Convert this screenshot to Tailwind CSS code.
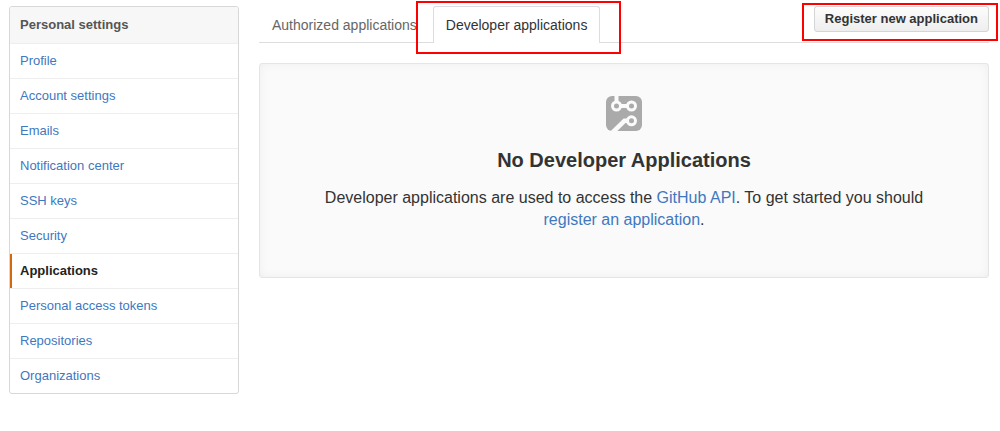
<!DOCTYPE html>
<html lang="en">
<head>
<meta charset="utf-8">
<meta name="viewport" content="width=device-width, initial-scale=1">
<title>Developer applications</title>
<script src="https://cdn.jsdelivr.net/npm/@tailwindcss/browser@4"></script>
</head>
<body class="bg-white font-['Liberation_Sans',Arial,sans-serif] text-[13px] text-[#333]">
<div class="flex items-start gap-5 pt-1.5 pr-[11px] pl-[9px]">
  <nav aria-labelledby="settings-title" class="w-[230px] shrink-0 overflow-hidden rounded-[3px] border border-[#d8d8d8] leading-[34px]">
    <h2 id="settings-title" class="border-b border-[#eee] bg-[#f7f7f7] px-2.5 leading-9 font-bold text-[#555]">Personal settings</h2>
    <ul class="divide-y divide-[#eee] text-[#4078c0]">
      <li><a href="#" class="block px-2.5">Profile</a></li>
      <li><a href="#" class="block px-2.5">Account settings</a></li>
      <li><a href="#" class="block px-2.5">Emails</a></li>
      <li><a href="#" class="block px-2.5">Notification center</a></li>
      <li><a href="#" class="block px-2.5">SSH keys</a></li>
      <li><a href="#" class="block px-2.5">Security</a></li>
      <li><a href="#" aria-current="page" class="block border-l-2 border-[#d26911] px-2 font-bold text-[#222]">Applications</a></li>
      <li><a href="#" class="block px-2.5">Personal access tokens</a></li>
      <li><a href="#" class="block px-2.5">Repositories</a></li>
      <li><a href="#" class="block px-2.5">Organizations</a></li>
    </ul>
  </nav>

  <main class="min-w-0 flex-1">
    <div class="flex items-start justify-between border-b border-[#ddd]">
      <div class="-mb-px flex gap-[3px] text-sm leading-9">
        <a href="#" class="border border-b-0 border-transparent px-3 whitespace-nowrap text-[#666]">Authorized applications</a>
        <div class="relative">
          <a href="#" aria-current="page" class="block rounded-t-[3px] border border-b-0 border-[#ddd] bg-white px-3 whitespace-nowrap text-[#333]">Developer applications</a>
          <div aria-hidden="true" class="pointer-events-none absolute -top-[5px] -right-[21px] -bottom-[11px] -left-[17px] border-2 border-[#f00]"></div>
        </div>
      </div>
      <div class="relative">
        <button type="button" class="block h-[26px] cursor-pointer rounded-[3px] border border-[#d5d5d5] bg-linear-to-b from-[#fcfcfc] to-[#eee] px-2.5 leading-6 font-bold whitespace-nowrap text-[#333]">Register new application</button>
        <div aria-hidden="true" class="pointer-events-none absolute -top-[3px] -right-[9px] -bottom-[9px] -left-3 border-2 border-[#f00]"></div>
      </div>
    </div>

    <section class="mt-5 rounded-[3px] border border-[#e5e5e5] bg-[#fafafa] px-12 pt-8 pb-[46px] text-center shadow-[inset_0_0_10px_rgba(0,0,0,0.05)]">
      <svg aria-hidden="true" class="mx-auto h-[35px] w-9" viewBox="0 0 36 35">
        <rect width="36" height="35" rx="6" fill="#aaa"/>
        <g fill="none" stroke="#fafafa">
          <path stroke-width="4" d="M10.500 0V6M14 10H22"/>
          <path stroke-width="4.500" d="M6 37L18.500 24.800H23"/>
        </g>
        <g fill="#aaa" stroke="#fafafa" stroke-width="3">
          <circle cx="10.500" cy="10" r="4"/>
          <circle cx="25.500" cy="10" r="4"/>
          <circle cx="25.500" cy="24.800" r="4"/>
        </g>
      </svg>
      <h1 class="mt-[17px] text-xl leading-6 font-bold">No Developer Applications</h1>
      <p class="mt-[15px] text-base leading-[22px]">Developer applications are used to access the <a href="#" class="text-[#4078c0]">GitHub API</a>. To get started you should <a href="#" class="text-[#4078c0]">register an application</a>.</p>
    </section>
  </main>
</div>
</body>
</html>
